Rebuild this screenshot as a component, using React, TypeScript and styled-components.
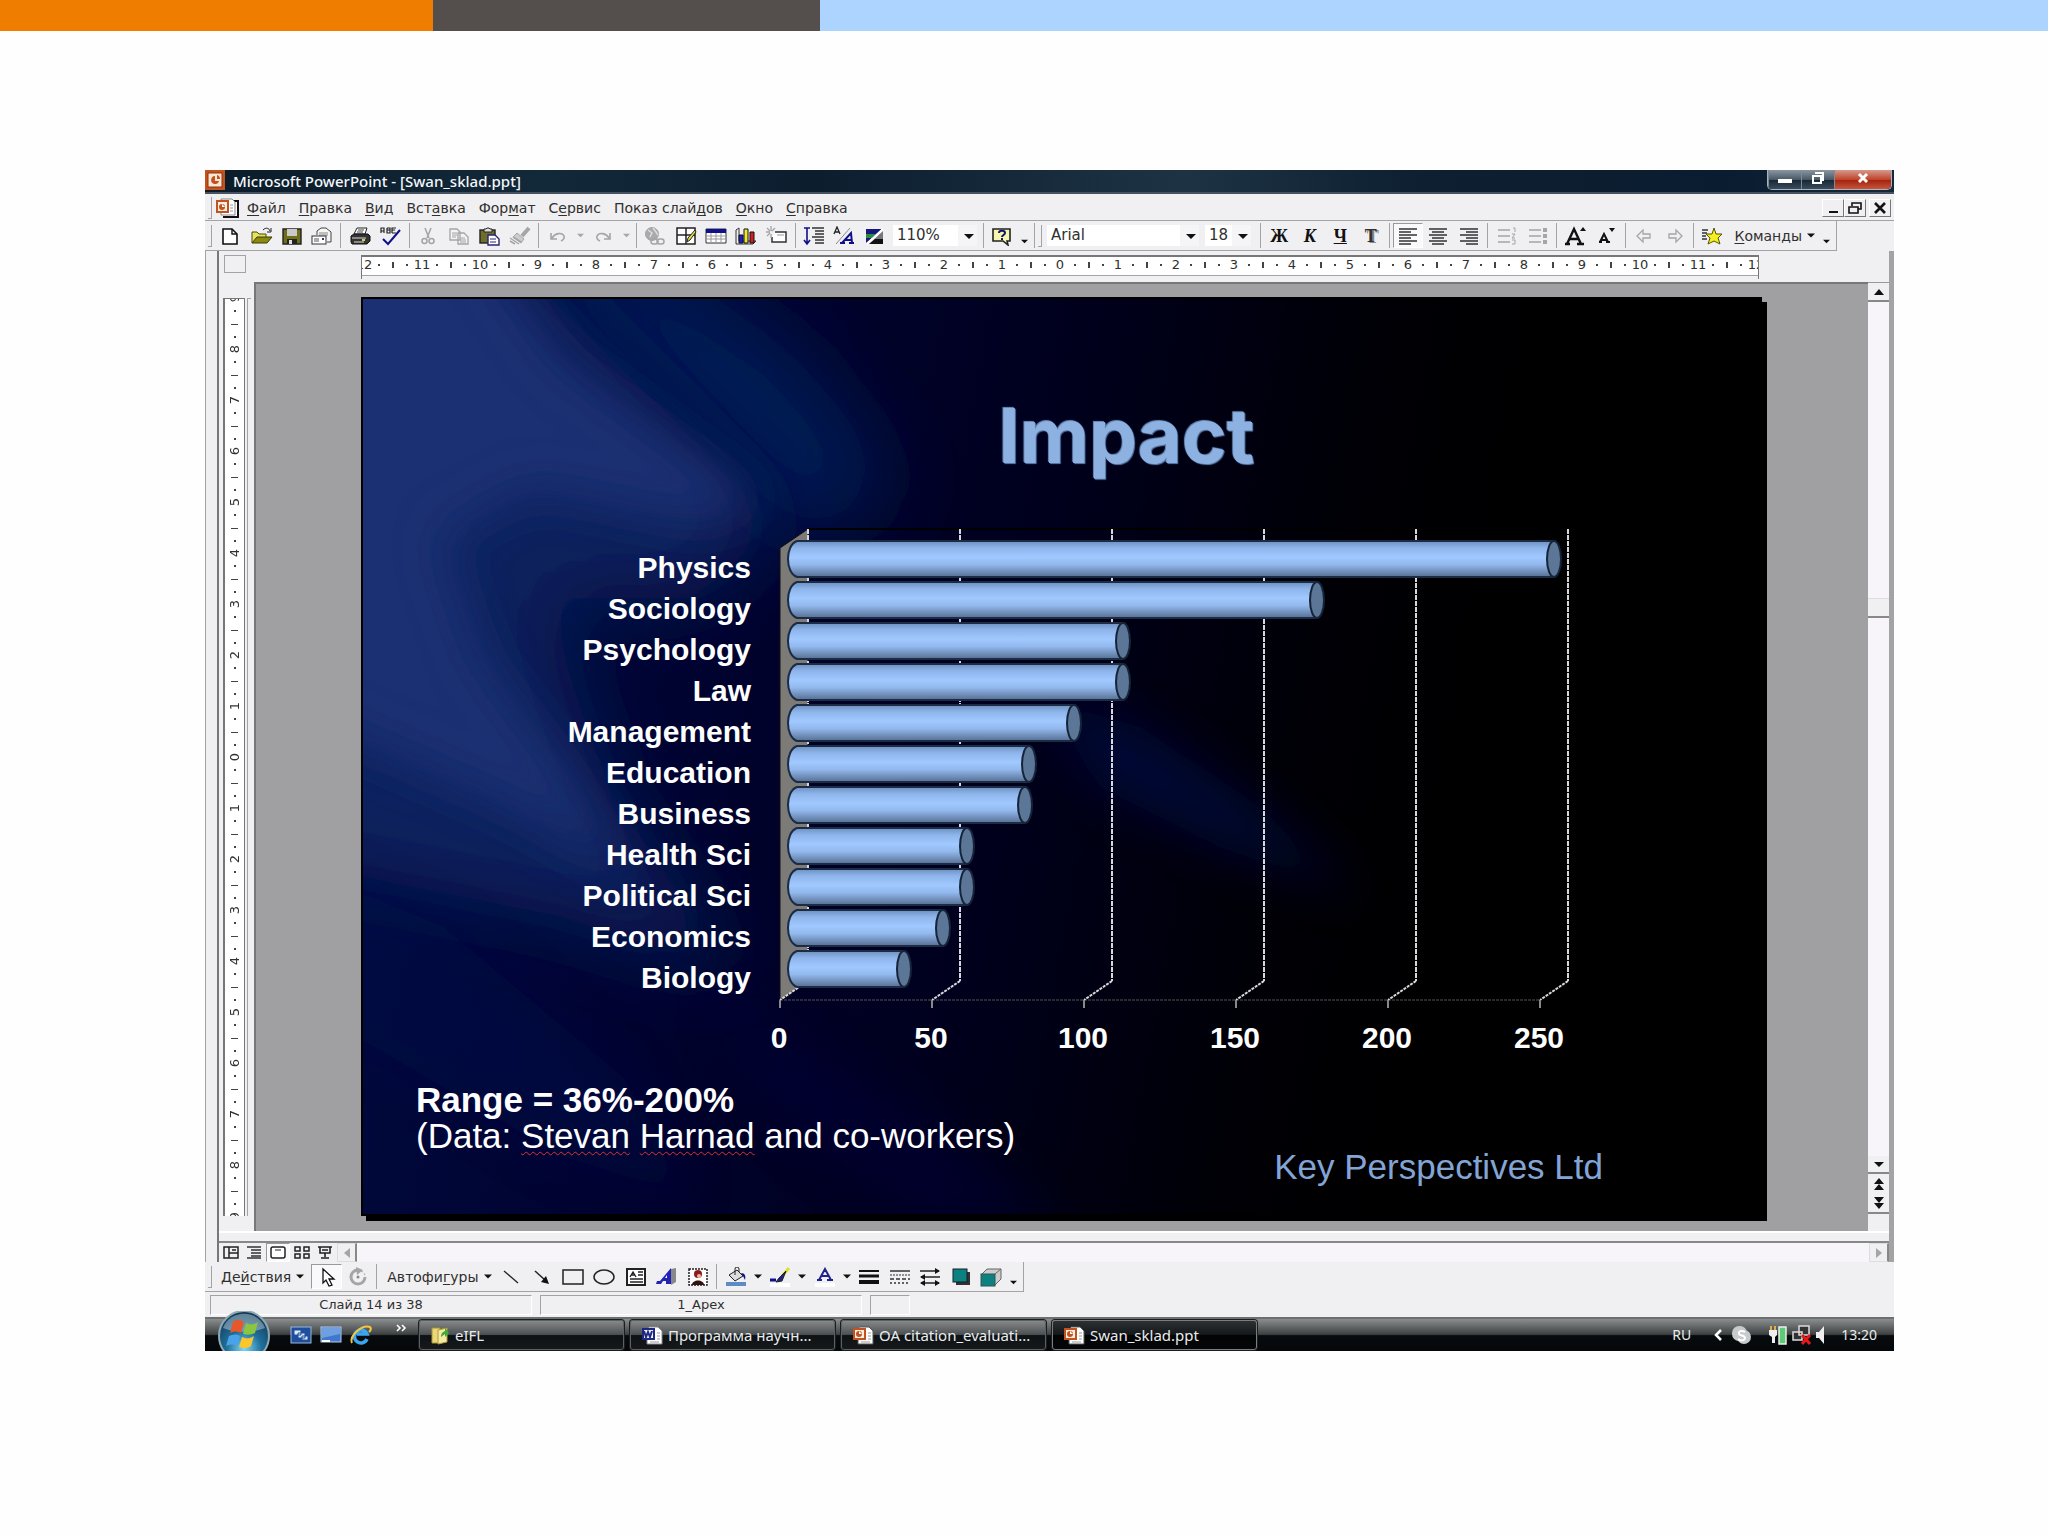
import React from 'react';
import styled, { createGlobalStyle, css } from 'styled-components';

const GlobalStyle = createGlobalStyle`
  * { box-sizing: border-box; }
  body { margin: 0; background: #fefefe; }
  button, select { font: inherit; color: inherit; }
`;

const uiFont = '"DejaVu Sans", Verdana, sans-serif';
const shellFont = '"Noto Sans", "Open Sans", sans-serif';
const slideFont = '"Liberation Sans", Arial, sans-serif';
const face = '#f0eff1';
const edge = '#a3a2a4';

/* ---------- page ---------- */
const Stripe = styled.div`
  display: grid;
  grid-template-columns: 433fr 387fr 1228fr;
  height: 31px;
`;
const StripePart = styled.span<{ $color: string }>`
  background: ${p => p.$color};
`;
const Page = styled.main`
  padding: 139px 154px 120px 205px;
`;
const AppWindow = styled.div`
  display: flex;
  flex-direction: column;
  background: ${face};
  color: #303030;
  font: 14px/20px ${uiFont};
  overflow: hidden;
`;

/* ---------- title bar ---------- */
const TitleBar = styled.header`
  display: flex;
  height: 24px;
  background: linear-gradient(90deg, #0b1b29, #12293a 20%, #0c1d2e 36%, #1d3344 58%, #0d1f30 72%, #0a1c2f 90%, #14293b);
  border-bottom: 2px solid #46525f;
`;
const AppTitle = styled.h1`
  flex: 1;
  margin: 0 0 0 8px;
  color: #f4f7fa;
  font: 500 15px/22px ${shellFont};
`;
const CaptionButtons = styled.div`
  display: flex;
  height: 20px;
  margin-right: 2px;
  border: 1px solid #a9b4be;
  border-top: 0;
  border-radius: 0 0 5px 5px;
  overflow: hidden;
`;
const CaptionButton = styled.button<{ $close?: boolean }>`
  display: grid;
  place-items: center;
  width: ${p => (p.$close ? 57 : 33)}px;
  padding: 0 0 3px;
  border: 0;
  border-left: 1px solid #7d8a96;
  background: ${p => p.$close
    ? 'linear-gradient(#d59a8c, #c0452b 50%, #a32410 55%, #c8553c)'
    : 'linear-gradient(#8a97a2, #4a5966 50%, #172836 55%, #3b4c5a)'};
`;

/* ---------- menu ---------- */
const MenuBar = styled.nav`
  display: flex;
  align-items: center;
  height: 27px;
  padding: 1px 3px 0 3px;
  border-bottom: 1px solid ${edge};
`;
const Grip = styled.span`
  width: 4px;
  height: 22px;
  margin-right: 2px;
  border-right: 1px solid ${edge};
  border-bottom: 1px solid ${edge};
`;
const MenuItems = styled.div`
  display: flex;
  flex: 1;
  gap: 13px;
  margin-left: 8px;
`;
const MenuItem = styled.button`
  padding: 0;
  border: 0;
  background: none;
  text-underline-offset: 2px;
`;
const ChildButtons = styled.div`
  display: flex;
`;
const ChildButton = styled.button<{ $apart?: boolean }>`
  display: grid;
  place-items: center;
  width: 22px;
  height: 18px;
  margin-left: ${p => (p.$apart ? 3 : 0)}px;
  padding: 0;
  border: 1px solid;
  border-color: #fff #777 #777 #fff;
  background: ${face};
`;

/* ---------- tool bars ---------- */
const ToolBar = styled.div`
  display: flex;
  align-self: flex-start;
  align-items: center;
  height: 30px;
  padding-left: 3px;
  border-right: 1px solid ${edge};
  border-bottom: 1px solid ${edge};
`;
const Group = styled.div<{ $width: number; $last?: boolean }>`
  display: flex;
  align-items: center;
  width: ${p => p.$width}px;
  height: 25px;
  padding: 0 3px;
  border-right: ${p => (p.$last ? 0 : 1)}px solid ${edge};
`;
const ToolButton = styled.button<{ $pressed?: boolean; $narrow?: boolean }>`
  display: grid;
  place-items: center;
  flex: ${p => (p.$narrow ? '0 0 14px' : '1 1 22px')};
  min-width: 0;
  height: 25px;
  padding: 0;
  border: 0;
  background: none;
  ${p => p.$pressed && css`
    border: 1px solid;
    border-color: #999 #fff #fff #999;
    background: #f9f8fa;
  `}
`;
const TextButton = styled.button`
  display: flex;
  align-items: center;
  flex: 0 0 auto;
  gap: 5px;
  padding: 0 4px 0 7px;
  border: 0;
  background: none;
  white-space: nowrap;
  text-underline-offset: 2px;
`;
const Combo = styled.label<{ $width: number }>`
  position: relative;
  flex: 0 0 ${p => p.$width}px;
  margin: 0 3px;
  height: 21px;
  background: linear-gradient(90deg, #fff calc(100% - 19px), #f5f4f6 0);
  svg { position: absolute; right: 3px; top: 9px; pointer-events: none; }
`;
const ComboSelect = styled.select`
  appearance: none;
  width: 100%;
  height: 21px;
  padding: 0 0 2px 4px;
  border: 0;
  background: none;
  font-size: 15px;
  line-height: 19px;
`;

/* ---------- work area ---------- */
const Workspace = styled.div`
  display: flex;
  border-right: 5px solid ${edge};
`;
const LeftStrip = styled.div`
  flex: 0 0 12px;
  border-left: 1px solid ${edge};
`;
const Editor = styled.div`
  flex: 1;
  min-width: 0;
  border-left: 2px solid #777;
`;
const RulerRow = styled.div`
  display: flex;
  height: 31px;
  padding: 4px 130px 0 5px;
`;
const Corner = styled.span`
  flex: 0 0 22px;
  height: 18px;
  margin-right: 115px;
  border: 1px solid ${edge};
`;
const HRuler = styled.div`
  display: flex;
  justify-content: center;
  flex: 1;
  min-width: 0;
  height: 24px;
  border: 1px solid #777;
  border-top-width: 2px;
  border-bottom: 0;
  overflow: hidden;
  background: linear-gradient(#fff 18px, ${edge} 18px, ${edge} 19px, ${face} 19px);
  font-size: 13px;
  line-height: 15px;
`;
const HUnit = styled.span<{ $end?: boolean }>`
  display: grid;
  grid-template-columns: ${p => (p.$end ? '16px' : '16px 14px 14px 14px')};
  flex: 0 0 ${p => (p.$end ? 16 : 58)}px;
  height: 15px;
  align-items: center;
  justify-items: center;
`;
const HNumber = styled.span`
  display: flex;
  justify-content: center;
  width: 16px;
`;
const Mark = styled.i<{ $w: number; $h: number }>`
  width: ${p => p.$w}px;
  height: ${p => p.$h}px;
  background: #444;
`;
const Body = styled.div`
  display: flex;
`;
const VRulerColumn = styled.div`
  flex: 0 0 35px;
  display: flex;
  gap: 2px;
  padding: 16px 3px 15px 4px;
`;
const VRuler = styled.div`
  display: flex;
  flex-direction: column;
  justify-content: center;
  flex: 0 0 22px;
  height: 918px;
  border: 1px solid #777;
  border-left-width: 2px;
  border-bottom: 0;
  overflow: hidden;
  background: #fff;
  font-size: 13px;
  line-height: 16px;
`;
const VUnit = styled.span<{ $end?: boolean }>`
  display: grid;
  grid-template-rows: ${p => (p.$end ? '12px' : '12px 13px 13px 13px')};
  flex: 0 0 ${p => (p.$end ? 12 : 51)}px;
  align-items: center;
  justify-items: center;
`;
const VNumber = styled.span`
  writing-mode: vertical-rl;
  transform: rotate(180deg);
`;
const VTrack = styled.span`
  width: 4px;
  border-left: 1px solid ${edge};
  border-top: 1px solid ${edge};
`;
const Pane = styled.div`
  flex: 1;
  min-width: 0;
  padding: 13px 106px 15px 105px;
  border-top: 2px solid #777;
  border-left: 2px solid #777;
  background: #a09fa1;
`;
const VScroll = styled.div`
  display: flex;
  flex-direction: column;
  flex: 0 0 21px;
  border-top: 1px solid #999;
  background: #f7f5f9;
`;
const ScrollButton = styled.button<{ $h: number }>`
  display: grid;
  place-items: center;
  height: ${p => p.$h}px;
  padding: 0;
  border: 0;
  border-bottom: 2px solid #888;
  background: ${face};
`;
const PageButtons = styled.div`
  display: flex;
  flex-direction: column;
  button:first-child { border-bottom: 0; }
`;
const Track = styled.div<{ $grow: number }>`
  flex: ${p => p.$grow} 1 0;
`;
const Thumb = styled.div`
  height: 20px;
  border-top: 1px solid #ddd;
  border-bottom: 2px solid #888;
  background: ${face};
`;
const ScrollFoot = styled.div`
  height: 17px;
  background: ${face};
`;
const Splitter = styled.div`
  height: 12px;
  border-top: 2px solid #fff;
  border-bottom: 2px solid #888;
`;
const ViewBar = styled.div`
  display: flex;
  align-items: stretch;
  height: 19px;
  background: #f7f5f9;
`;
const ViewButtons = styled.div`
  display: flex;
  width: 118px;
  background: ${face};
`;
const ViewButton = styled(ToolButton)`
  height: 19px;
`;
const EndButton = styled.button<{ $left?: boolean }>`
  width: 20px;
  padding: 0;
  display: grid;
  place-items: center;
  border: 1px solid #ddd;
  border-right: 2px solid #888;
  margin-left: ${p => (p.$left ? '0' : 'auto')};
  background: ${face};
`;

/* ---------- slide ---------- */
const Slide = styled.section`
  position: relative;
  border: 2px solid #000;
  box-shadow: 5px 5px 0 #000;
  background: #000;
  color: #fff;
  font-family: ${slideFont};
`;
const Backdrop = styled.svg`
  position: absolute;
  inset: 0;
  width: 100%;
  height: 100%;
`;
const SlideContent = styled.div`
  position: relative;
  padding: 86px 157px 29px 53px;
`;
const SlideTitle = styled.h2`
  margin: 0 0 35px 234px;
  text-align: center;
  color: #8db2e2;
  font: bold 76px/100px Inter, ${shellFont};
  text-shadow: 1px 1px 1px #5c7fae, -1px -1px 1px #6f93c2;
`;
const Chart = styled.svg`
  display: block;
  width: 1080px;
  max-width: 100%;
  margin-left: 124px;
  font: bold 30px ${slideFont};
`;
const Captions = styled.div`
  display: flex;
  justify-content: space-between;
  margin-top: 22px;
`;
const Notes = styled.p`
  margin: 0;
  font-size: 35px;
  line-height: 36px;
`;
const Misspelt = styled.span`
  text-decoration: underline wavy #e03030 1px;
  text-underline-offset: 3px;
  text-decoration-skip-ink: none;
`;
const Credit = styled.p`
  margin: 67px 0 0;
  color: #83a5d6;
  font-size: 35px;
  line-height: 36px;
`;

/* ---------- status and task bar ---------- */
const StatusBar = styled.footer`
  display: flex;
  gap: 8px;
  padding: 3px 5px 2px;
  font-size: 13px;
  line-height: 18px;
`;
const StatusPane = styled.span<{ $width: number }>`
  width: ${p => p.$width}px;
  height: 20px;
  border: 1px solid;
  border-color: ${edge} #fff #fff ${edge};
  text-align: center;
`;
const TaskBar = styled.div`
  display: flex;
  align-items: center;
  height: 34px;
  border-top: 2px solid #6b6f70;
  background: linear-gradient(#8b8e8f, #3d4142 48%, #070b0d 52%, #04080a);
  color: #e9ecee;
  font: 14px/20px ${shellFont};
`;
const StartButton = styled.button`
  width: 56px;
  height: 40px;
  margin: -8px 16px 0 11px;
  padding: 0;
  border: 0;
  background: none;
`;
const QuickLaunch = styled.div`
  display: flex;
  align-items: center;
  gap: 8px;
  width: 131px;
  padding-left: 2px;
`;
const BareButton = styled.button`
  display: grid;
  place-items: center;
  padding: 0;
  border: 0;
  background: none;
`;
const More = styled(BareButton)`
  margin: -14px 0 0 16px;
`;
const Tasks = styled.div`
  display: flex;
  flex: 1;
  gap: 6px;
`;
const Task = styled.button<{ $active?: boolean }>`
  display: flex;
  align-items: center;
  gap: 5px;
  width: 205px;
  height: 30px;
  padding: 0 0 0 10px;
  border: 1px solid ${p => (p.$active ? '#7c7c7c' : '#5b6062')};
  border-radius: 3px;
  background: ${p => p.$active
    ? 'linear-gradient(#2e3133, #15181a 48%, #020303 52%, #050607)'
    : 'linear-gradient(#85898a, #4c5052 48%, #0e1214 52%, #15191b)'};
  box-shadow: 0 0 0 1px #1b1e20;
  font-size: 15px;
  white-space: nowrap;
`;
const Tray = styled.div`
  display: flex;
  align-items: center;
  padding-right: 17px;
`;
const Language = styled.span`
  margin-right: 22px;
`;
const Clock = styled.time`
  margin-left: 14px;
`;

/* ---------- icons ---------- */
const Ico = ({ w = 22, h = 20, children }: { w?: number; h?: number; children: React.ReactNode }) => (
  <svg width={w} height={h} viewBox={`0 0 ${w} ${h}`} fill="none" aria-hidden="true">{children}</svg>
);
const Down = ({ c = '#111', w = 9 }: { c?: string; w?: number }) => (
  <svg width={w} height={5} viewBox="0 0 10 5" aria-hidden="true"><path d="M0 0h10L5 5z" fill={c} /></svg>
);
const g = '#a5a4a6';
const navy = '#10108a';

const PptIcon = () => (
  <Ico w={20} h={20}>
    <rect width="20" height="20" fill="#c2521e" /><rect x="3" y="3" width="14" height="14" fill="#fbe6d6" stroke="#8c3410" />
    <path d="M10 6a4 4 0 1 0 4 5h-4z" fill="#c2521e" /><path d="M12 5a4 4 0 0 1 3 4h-3z" fill="#c2521e" />
  </Ico>
);
const PptDoc = ({ word = false }: { word?: boolean }) => (
  <Ico w={22} h={20}>
    <path d="M8 2h9l4 4v13H6V8" fill="#fff" stroke={word ? '#888' : '#555'} />
    <path d="M16 8h3M16 11h3M16 14h3M9 17h9" stroke="#999" />
    <rect x="1" y="3" width="13" height="12" fill={word ? '#1b2a86' : '#c2521e'} />
    <rect x="3" y="5" width="9" height="8" fill="#fbeee4" />
    {word ? <path d="M3 6l2 6 2-5 2 5 2-6" stroke="#1b2a86" strokeWidth="2" />
      : <><circle cx="7" cy="9" r="3" fill="#c2521e" /><path d="M7 9V6l3 3z" fill="#fff" /></>}
  </Ico>
);
const MenuDoc = () => (
  <Ico w={25} h={20}>
    <path d="M12 3h12v16H9" fill="#fff" stroke="#111" strokeWidth="2" />
    <path d="M7 1h11l3 3v13H7z" fill="#fff" stroke="#888" />
    <path d="M16 7h3M16 10h3M16 13h3" stroke="#999" />
    <rect x="2" y="2" width="13" height="13" fill="#c2521e" />
    <rect x="4" y="4" width="9" height="9" fill="#fbeee4" />
    <circle cx="8" cy="9" r="3" fill="#c2521e" /><path d="M8 9V6l3 3z" fill="#fff" />
  </Ico>
);
const icons: Record<string, React.ReactNode> = {
  new: <Ico><path d="M2 3h9l5 5v10H2z" fill="#fff" stroke="#111" strokeWidth="1.6" /><path d="M11 3v5h5" stroke="#111" strokeWidth="1.4" /></Ico>,
  open: <Ico><path d="M1 17V6h5l2 2h7v3" fill="#e8e060" stroke="#4b4b00" /><path d="M1 17l5-6h15l-5 6z" fill="#8a8a10" stroke="#3c3c00" /><path d="M12 4c3-3 6-2 7 1M20 2v4h-4" stroke="#222" /></Ico>,
  save: <Ico><path d="M2 3h18v15H2z" fill="#6e6e18" stroke="#222" strokeWidth="1.4" /><rect x="6" y="3" width="10" height="7" fill="#c9c9c9" /><rect x="6" y="13" width="10" height="5" fill="#222" /><rect x="8" y="14" width="3" height="4" fill="#ddd" /></Ico>,
  mail: <Ico><path d="M6 9V5l4-3h5l5 4v10h-4" fill="#f5f5f5" stroke="#444" /><path d="M8 7h9M8 9h9" stroke="#888" /><rect x="1" y="10" width="14" height="8" fill="#fff" stroke="#333" /><path d="M3 13h5M3 15h5" stroke="#557" /><rect x="11" y="12" width="2" height="2" fill="#336" /></Ico>,
  print: <Ico><path d="M8 2h10l-2 6H5z" fill="#fff" stroke="#222" /><path d="M9 4h6M8 6h6" stroke="#444" /><path d="M2 10l3-2h14l2 2v5l-3 3H3l-1-2z" fill="#333" stroke="#111" /><path d="M3 12h14M5 16h10" stroke="#ddd" /><rect x="13" y="13" width="3" height="2" fill="#e0d040" /></Ico>,
  spell: <Ico><path d="M1 7V2h3v5M1 5h3M7 2v5h3V4H7h3V2H7M12 7V2h4M12 4h3M12 7h4" stroke="#222" strokeWidth="1.2" /><path d="M3 13l5 5L20 4" stroke={navy} strokeWidth="2" /></Ico>,
  cut: <Ico><path d="M8 2l4 10M14 2l-4 10" stroke={g} strokeWidth="1.5" /><circle cx="7.500" cy="15" r="2.500" stroke={g} strokeWidth="1.500" /><circle cx="14.500" cy="15" r="2.500" stroke={g} strokeWidth="1.500" /></Ico>,
  copy: <Ico><path d="M2 3h7l3 3v8H2zM10 7h6l4 4v7H10z" fill="#f3f3f3" stroke={g} strokeWidth="1.300" /><path d="M4 7h5M4 9h5M4 11h4M12 12h5M12 14h6M12 16h6" stroke={g} /></Ico>,
  paste: <Ico><rect x="2" y="4" width="15" height="13" fill="#6e6e28" stroke="#222" strokeWidth="1.400" /><path d="M6 6V3h2l1-1h2l1 1h2v3z" fill="#ddd" stroke="#222" /><path d="M10 9h7l4 4v6H10z" fill="#fff" stroke="#26267a" strokeWidth="1.400" /><path d="M12 13h6M12 16h6" stroke="#26267a" /></Ico>,
  brush: <Ico><path d="M20 2l-7 8" stroke={g} strokeWidth="4" /><path d="M8 7l7 6-3 4-8-6z" fill="#ccc" stroke={g} /><path d="M1 12l9 6M1 15l5 3M4 11l8 5" stroke={g} strokeWidth="1.500" /></Ico>,
  undo: <Ico><path d="M4 7v6h6M5 12c3-5 10-6 12-2 1 3-1 4-3 5" stroke={g} strokeWidth="1.600" /></Ico>,
  redo: <Ico><path d="M18 7v6h-6M17 12c-3-5-10-6-12-2-1 3 1 4 3 5" stroke={g} strokeWidth="1.600" /></Ico>,
  globe: <Ico><circle cx="8" cy="8" r="6.500" fill="#aaa" stroke={g} /><path d="M4 4l4 3-2 4M9 2l3 4 2 3" stroke="#ddd" strokeWidth="1.500" /><rect x="7" y="13" width="7" height="5" rx="2.500" stroke={g} strokeWidth="1.500" /><rect x="13" y="13" width="7" height="5" rx="2.500" stroke={g} strokeWidth="1.500" /></Ico>,
  tables: <Ico><path d="M2 2h18v16H2zM2 9h18M11 2v16" fill="#fff" stroke="#222" strokeWidth="1.500" /><path d="M12 16l1-4 7-8 1 2-6 8z" fill="#e4e040" stroke="#222" /></Ico>,
  table: <Ico><path d="M1 3h20v14H1z" fill="#fff" stroke="#333" /><rect x="1" y="3" width="20" height="4" fill={navy} /><path d="M1 10h20M1 13h20M6 7v10M11 7v10M16 7v10" stroke="#999" /></Ico>,
  chart: <Ico><path d="M1 4l3-2v13h17l-3 3H1z" fill="#eee" stroke="#333" /><path d="M4 9h4v8H4z" fill="#2020c0" stroke="#111" /><path d="M9 3h4v14H9z" fill="#f0e830" stroke="#111" /><path d="M15 6h4v11h-4z" fill="#d02020" stroke="#111" /></Ico>,
  slide: <Ico><path d="M9 6h11v10H6v-5" fill="#fff" stroke="#333" strokeWidth="1.500" /><path d="M11 9h7" stroke="#999" /><path d="M5 0v5M0 6h4M1 2l3 3M9 2L6 5M1 10l3-3M5 8v4" stroke={g} strokeWidth="1.300" /></Ico>,
  expand: <Ico><path d="M4 2v15M1 14l3 4 3-4M1 2h6" stroke={navy} strokeWidth="1.600" /><path d="M9 2h12M12 5h9M12 8h9M9 11h12M12 14h9M12 17h9" stroke="#333" strokeWidth="1.300" /></Ico>,
  fonts: <Ico><path d="M1 8l3-7 3 7M2 6h4" stroke="#222" strokeWidth="1.300" /><path d="M3 18L17 2" stroke="#888" /><path d="M9 17l9-10 1 10M12 14h7M7 17h5M16 17h5" stroke={navy} strokeWidth="2" /></Ico>,
  gray: <Ico><path d="M2 3h16L2 17z" fill="#171780" /><path d="M2 8h10l-4 4H2z" fill="#2a8a40" /><path d="M19 5v13H5z" fill="#777" /><path d="M11 13h8v5H5z" fill="#111" /><path d="M3 18L19 3" stroke="#fff" strokeWidth="2" /></Ico>,
  help: <Ico><path d="M2 3h17v12h-3l1 4-5-4H2z" fill="#f7f6b0" stroke="#222" strokeWidth="1.600" /><path d="M8 7c0-3 6-3 6 0 0 2-3 2-3 4M11 12v2" stroke="#15156a" strokeWidth="2" /></Ico>,
  left: <Ico><path d="M2 3h18M2 6h12M2 9h18M2 12h12M2 15h18M2 18h12" stroke="#333" strokeWidth="1.400" /></Ico>,
  center: <Ico><path d="M2 3h18M5 6h12M2 9h18M5 12h12M2 15h18M5 18h12" stroke="#333" strokeWidth="1.400" /></Ico>,
  right: <Ico><path d="M2 3h18M8 6h12M2 9h18M8 12h12M2 15h18M8 18h12" stroke="#333" strokeWidth="1.400" /></Ico>,
  numbers: <Ico><path d="M2 4h12M2 10h12M2 16h12" stroke={g} strokeWidth="1.300" /><path d="M17 2h2v4M16 8h3l-3 4h3M16 14h3v4h-3" stroke={g} /></Ico>,
  bullets: <Ico><path d="M2 4h12M2 10h12M2 16h12" stroke={g} strokeWidth="1.300" /><path d="M16 2h4v4h-4zM16 8h4v4h-4zM16 14h4v4h-4z" fill={g} /></Ico>,
  bigger: <Ico><path d="M2 18L9 3l7 15M5 13h8M0 18h5M12 18h7" stroke="#111" strokeWidth="2.400" /><path d="M15 5h6l-3-4z" fill="#111" /></Ico>,
  smaller: <Ico><path d="M4 16l4-8 4 8M5 14h6M3 16h3M10 16h4" stroke="#111" strokeWidth="2" /><path d="M13 2h6l-3 4z" fill="#111" /></Ico>,
  prev: <Ico><path d="M4 10l6-6v4h7v4h-7v4z" stroke={g} strokeWidth="1.300" /></Ico>,
  next: <Ico><path d="M18 10l-6-6v4H5v4h7v4z" stroke={g} strokeWidth="1.300" /></Ico>,
  star: <Ico><path d="M1 4h6M1 7h5M1 10h4M1 13h5" stroke="#333" strokeWidth="1.500" /><path d="M13 2l2 6h6l-4 4 2 6-6-3-6 3 2-6-4-4h6z" fill="#f5ee20" stroke="#555500" /></Ico>,
  pointer: <Ico><path d="M7 2v14l3-3 3 6 3-1-3-6h5z" fill="#fff" stroke="#111" strokeWidth="1.300" /></Ico>,
  rotate: <Ico><path d="M11 3a7 7 0 1 0 7 7" stroke={g} strokeWidth="3" /><path d="M9 0l7 3-6 5z" fill={g} /><circle cx="11" cy="10" r="1.500" fill="#888" /><path d="M14 4c3 1 4 3 4 6" stroke={g} strokeDasharray="2 2" /></Ico>,
  line: <Ico><path d="M4 4l14 12" stroke="#222" strokeWidth="1.300" /></Ico>,
  arrow: <Ico><path d="M4 4l10 9" stroke="#222" strokeWidth="1.500" /><path d="M18 17l-8-2 5-6z" fill="#111" /></Ico>,
  rect: <Ico><path d="M1 3h20v14H1z" stroke="#222" strokeWidth="1.500" /></Ico>,
  oval: <Ico><ellipse cx="11" cy="10" rx="10" ry="7" stroke="#222" strokeWidth="1.500" /></Ico>,
  textbox: <Ico><path d="M2 2h18v16H2z" fill="#fff" stroke="#222" strokeWidth="2" /><path d="M5 10l3-5 3 5M6 8h4M13 5h5M13 8h5M5 12h13M5 15h13" stroke="#222" strokeWidth="1.400" /></Ico>,
  wordart: <Ico><path d="M1 14h3L15 1v16h-5v-3H7l-2 3H0z" fill="#2222b4" /><path d="M15 2l5-1v14l-5 3z" fill="#888" /><path d="M9 11l2-3v3z" fill="#fff" /></Ico>,
  clip: <Ico><path d="M2 2h18v16H2z" fill="#fff" stroke="#222" strokeDasharray="2 1" strokeWidth="1.500" /><circle cx="11" cy="7" r="4" fill="#8c1c1c" /><circle cx="12" cy="9" r="2" fill="#eebb99" /><path d="M5 18c0-6 12-6 12 0z" fill="#331111" /></Ico>,
  fill: <Ico><path d="M4 8l8-5 6 6-8 5z" fill="#ddd" stroke="#222" /><path d="M10 8V2a2 2 0 0 1 4 0v3" stroke="#222" /><path d="M16 6c4 0 5 3 4 7l-2-4z" fill={navy} /><rect x="1" y="15" width="20" height="4" fill="#5c8cc4" /></Ico>,
  pen: <Ico><path d="M1 13h6" stroke={navy} strokeWidth="3" /><path d="M20 1L13 9" stroke="#dce030" strokeWidth="3" /><path d="M17 4l-4 10-6 1 3-4z" fill="#222288" stroke="#222" /><rect x="1" y="16" width="20" height="4" fill="#fff" /></Ico>,
  colour: <Ico><path d="M5 13l6-11 6 11M7 9h8M3 13h5M13 13h6" stroke="#22228c" strokeWidth="2" /><rect x="1" y="16" width="20" height="4" fill="#fff" /></Ico>,
  weight: <Ico><path d="M1 4h20" stroke="#111" strokeWidth="2" /><path d="M1 9h20" stroke="#111" strokeWidth="3" /><path d="M1 15h20" stroke="#111" strokeWidth="4" /></Ico>,
  dash: <Ico><path d="M1 4h20" stroke="#333" strokeWidth="1.500" /><path d="M1 8h20" stroke="#333" strokeDasharray="2 1" /><path d="M1 12h20" stroke="#333" strokeWidth="1.500" strokeDasharray="4 2" /><path d="M1 16h20" stroke="#333" strokeWidth="1.500" strokeDasharray="2 2" /></Ico>,
  arrows: <Ico><path d="M1 4h19M2 10h19M2 16h18" stroke="#222" strokeWidth="1.500" /><path d="M21 4l-5-3v6zM1 10l5-3v6zM1 16l5-3v6zM21 16l-5-3v6z" fill="#111" /></Ico>,
  shadow: <Ico><rect x="6" y="5" width="14" height="13" fill="#333" /><rect x="3" y="2" width="14" height="13" fill="#0d8080" stroke="#123" /></Ico>,
  cube: <Ico><path d="M1 8l6-6h14v10l-6 6z" fill="#ccc" stroke="#666" /><rect x="1" y="7" width="14" height="12" fill="#0d8080" stroke="#355" /><path d="M15 7l6-5" stroke="#666" /></Ico>,
  normal: <Ico w={18} h={15}><path d="M2 2h14v11H2zM7 2v11M7 8h9M10 5h4" stroke="#222" strokeWidth="1.500" /></Ico>,
  outline: <Ico w={18} h={15}><path d="M2 2h14M6 5h10M6 8h10M6 11h10M2 13h14" stroke="#333" strokeWidth="1.300" /></Ico>,
  single: <Ico w={18} h={15}><rect x="2" y="2" width="14" height="11" rx="2" fill="#fff" stroke="#222" strokeWidth="1.500" /><path d="M6 5h6" stroke="#222" /></Ico>,
  sorter: <Ico w={18} h={15}><path d="M2 2h5v4H2zM11 2h5v4h-5zM2 9h5v4H2zM11 9h5v4h-5z" stroke="#222" strokeWidth="1.500" /></Ico>,
  show: <Ico w={18} h={15}><path d="M2 2h14M4 2v6h10V2M9 8v4M5 13h8M6 5h6" stroke="#222" strokeWidth="1.600" /></Ico>,
};

const Glyph = styled.span<{ $italic?: boolean; $line?: boolean; $shade?: boolean }>`
  color: #111;
  font: bold 18px/20px "Liberation Serif", serif;
  font-style: ${p => (p.$italic ? 'italic' : 'normal')};
  text-decoration: ${p => (p.$line ? 'underline' : 'none')};
  ${p => p.$shade && 'color: #333; text-shadow: 2px 1px 0 #888;'}
`;

const Tool = ({ name, label, pressed }: { name: string; label: string; pressed?: boolean }) => (
  <ToolButton aria-label={label} $pressed={pressed}>{icons[name]}</ToolButton>
);
const DropTool = ({ label, muted }: { label: string; muted?: boolean }) => (
  <ToolButton aria-label={label} $narrow><Down c={muted ? g : '#111'} w={muted ? 7 : 8} /></ToolButton>
);
const LowDropButton = styled(ToolButton)`
  place-items: end center;
  padding-bottom: 4px;
`;
const MoreTools = ({ label }: { label: string }) => (
  <LowDropButton aria-label={label} $narrow><Down w={7} /></LowDropButton>
);
const Mnemonic = ({ text }: { text: string }) => {
  const [before, after] = text.split('&');
  return <span>{before}<u>{after[0]}</u>{after.slice(1)}</span>;
};
const Picker = ({ label, value, width }: { label: string; value: string; width: number }) => (
  <Combo $width={width}>
    <ComboSelect aria-label={label} defaultValue={value}><option>{value}</option></ComboSelect>
    <Down w={10} />
  </Combo>
);

/* ---------- chart ---------- */
const disciplines: [string, number][] = [
  ['Physics', 1561], ['Sociology', 1324], ['Psychology', 1130], ['Law', 1130], ['Management', 1081],
  ['Education', 1036], ['Business', 1032], ['Health Sci', 974], ['Political Sci', 974], ['Economics', 950], ['Biology', 911],
];
const ticks = [0, 50, 100, 150, 200, 250];

const ImpactChart = () => (
  <Chart viewBox="540 520 1080 540" role="img" aria-label="Impact by discipline">
    <defs>
      <linearGradient id="bar" x1="0" y1="0" x2="0" y2="1">
        <stop offset="0" stopColor="#6c8fc0" /><stop offset=".2" stopColor="#8fb6ec" /><stop offset=".45" stopColor="#a1c9ff" />
        <stop offset=".65" stopColor="#93b9ee" /><stop offset="1" stopColor="#566f92" />
      </linearGradient>
    </defs>
    <path d="M780 548L808 529V981L780 1000z" fill="#7d7b78" stroke="#111" />
    <path d="M808 529H1569" stroke="#000" strokeWidth="2" />
    <path d="M780 1000H1541" stroke="#555" strokeDasharray="3 1" />
    {ticks.map((t, i) => {
      const x = 808 + i * 152;
      return (
        <g key={t} stroke="#d8d8dc" strokeWidth="2" fill="none">
          <path d={`M${x} 529V981`} strokeDasharray="5 1" />
          <path d={`M${x} 981L${x - 28} 1000`} strokeDasharray="3 1" />
          <path d={`M${x - 28} 1000v8`} stroke="#888" />
          <text x={x - 29} y="1048" textAnchor="middle" fill="#fff" stroke="none">{t}</text>
        </g>
      );
    })}
    {disciplines.map(([name, end], i) => {
      const y = 541 + i * 41;
      return (
        <g key={name}>
          <text x="751" y={y + 37} textAnchor="end" fill="#fff">{name}</text>
          <path d={`M${end - 7} ${y}H797C785 ${y + 4} 785 ${y + 32} 797 ${y + 36}H${end - 7}z`} fill="url(#bar)" stroke="#1c2c44" strokeWidth="2" />
          <ellipse cx={end - 7} cy={y + 18} rx="7" ry="18" fill="#5b7696" stroke="#16243a" strokeWidth="2" />
        </g>
      );
    })}
  </Chart>
);

const SlideBackdrop = () => (
  <Backdrop viewBox="0 0 1401 918" preserveAspectRatio="none" aria-hidden="true">
    <defs>
      <linearGradient id="night" x1="0" y1="0" x2="1" y2=".12">
        <stop offset="0" stopColor="#000c42" /><stop offset=".28" stopColor="#000330" /><stop offset=".5" stopColor="#00001e" />
        <stop offset=".72" stopColor="#000006" /><stop offset=".85" stopColor="#000" />
      </linearGradient>
      <filter id="wide" x="-50%" y="-50%" width="200%" height="200%"><feGaussianBlur stdDeviation="40" /></filter>
      <filter id="soft" x="-50%" y="-50%" width="200%" height="200%"><feGaussianBlur stdDeviation="24" /></filter>
    </defs>
    <rect width="1401" height="918" fill="url(#night)" />
    <path d="M150 -60L300 -40L440 60L540 190L440 240z" fill="#001a56" filter="url(#wide)" />
    <path d="M-100 -60H130L420 230L330 300L180 300L250 500L380 680L200 620L-100 560z" fill="#08205e" filter="url(#wide)" />
    <path d="M-100 -100H90L200 60L400 205L340 225L170 190L80 240L120 360L210 480L270 580L150 510L-100 400z" fill="#1b3174" opacity=".9" filter="url(#soft)" />
    <path d="M-40 580L80 630L260 780L330 900L200 860L-40 720z" fill="#000e4a" opacity=".5" filter="url(#soft)" />
    <path d="M680 400L780 430L900 510L1000 600L860 550L740 490z" fill="#000f50" opacity=".6" filter="url(#soft)" />
    <path d="M350 700L560 820L700 930H560L420 820z" fill="#00023a" opacity=".5" filter="url(#soft)" />
  </Backdrop>
);

const hNumbers = Array.from({ length: 25 }, (_, i) => Math.abs(i - 12));
const vNumbers = Array.from({ length: 19 }, (_, i) => Math.abs(i - 9));

export default function App() {
  return (
    <>
      <GlobalStyle />
      <Stripe>
        <StripePart $color="#ef7d00" /><StripePart $color="#544e4d" /><StripePart $color="#acd4ff" />
      </Stripe>
      <Page>
        <AppWindow>
          <TitleBar>
            <PptIcon />
            <AppTitle>Microsoft PowerPoint - [Swan_sklad.ppt]</AppTitle>
            <CaptionButtons>
              <CaptionButton aria-label="Свернуть"><Ico w={16} h={14}><path d="M1 8h14v4H1z" fill="#fff" /></Ico></CaptionButton>
              <CaptionButton aria-label="Развернуть"><Ico w={16} h={14}><path d="M5 2h8v7h-2M3 5h8v7H3z" stroke="#fff" strokeWidth="2" /></Ico></CaptionButton>
              <CaptionButton aria-label="Закрыть" $close><Ico w={14} h={12}><path d="M3 2l8 8M11 2l-8 8" stroke="#fff" strokeWidth="3" /></Ico></CaptionButton>
            </CaptionButtons>
          </TitleBar>

          <MenuBar>
            <Grip />
            <MenuDoc />
            <MenuItems>
              {['&Файл', '&Правка', '&Вид', 'Вст&авка', 'Фор&мат', 'С&ервис', 'Показ слай&дов', '&Окно', '&Справка'].map(t => (
                <MenuItem key={t}><Mnemonic text={t} /></MenuItem>
              ))}
            </MenuItems>
            <ChildButtons>
              <ChildButton aria-label="Свернуть документ"><Ico w={14} h={12}><path d="M3 10h9" stroke="#111" strokeWidth="2" /></Ico></ChildButton>
              <ChildButton aria-label="Восстановить документ"><Ico w={14} h={12}><path d="M4 4V1h9v6h-3M1 5h9v6H1z" stroke="#111" strokeWidth="1.600" /></Ico></ChildButton>
              <ChildButton aria-label="Закрыть документ" $apart><Ico w={14} h={12}><path d="M2 1l10 10M12 1L2 11" stroke="#111" strokeWidth="2.600" /></Ico></ChildButton>
            </ChildButtons>
          </MenuBar>

          <ToolBar>
            <Grip />
            <Group $width={127}>
              <Tool name="new" label="Создать" /><Tool name="open" label="Открыть" /><Tool name="save" label="Сохранить" /><Tool name="mail" label="Отправить" />
            </Group>
            <Group $width={69}><Tool name="print" label="Печать" /><Tool name="spell" label="Орфография" /></Group>
            <Group $width={129}>
              <Tool name="cut" label="Вырезать" /><Tool name="copy" label="Копировать" /><Tool name="paste" label="Вставить" /><Tool name="brush" label="Формат по образцу" />
            </Group>
            <Group $width={98}>
              <Tool name="undo" label="Отменить" /><DropTool label="Список отмены" muted /><Tool name="redo" label="Вернуть" /><DropTool label="Список возврата" muted />
            </Group>
            <Group $width={159}>
              <Tool name="globe" label="Гиперссылка" /><Tool name="tables" label="Таблицы и границы" /><Tool name="table" label="Таблица" /><Tool name="chart" label="Диаграмма" /><Tool name="slide" label="Создать слайд" />
            </Group>
            <Group $width={188}>
              <Tool name="expand" label="Развернуть все" /><Tool name="fonts" label="Показать формат" /><Tool name="gray" label="Оттенки серого" />
              <Picker label="Масштаб" value="110%" width={84} />
            </Group>
            <Group $width={51}><Tool name="help" label="Справка" /><MoreTools label="Другие кнопки" /></Group>
            <Group $width={226}>
              <Grip />
              <Picker label="Шрифт" value="Arial" width={152} /><Picker label="Размер" value="18" width={46} />
            </Group>
            <Group $width={129}>
              <ToolButton aria-label="Полужирный"><Glyph>Ж</Glyph></ToolButton>
              <ToolButton aria-label="Курсив"><Glyph $italic>К</Glyph></ToolButton>
              <ToolButton aria-label="Подчеркнутый"><Glyph $line>Ч</Glyph></ToolButton>
              <ToolButton aria-label="Тень"><Glyph $shade>Т</Glyph></ToolButton>
            </Group>
            <Group $width={98}>
              <Tool name="left" label="По левому краю" pressed /><Tool name="center" label="По центру" /><Tool name="right" label="По правому краю" />
            </Group>
            <Group $width={69}><Tool name="numbers" label="Нумерация" /><Tool name="bullets" label="Маркеры" /></Group>
            <Group $width={69}><Tool name="bigger" label="Увеличить" /><Tool name="smaller" label="Уменьшить" /></Group>
            <Group $width={68}><Tool name="prev" label="Повысить уровень" /><Tool name="next" label="Понизить уровень" /></Group>
            <Group $width={142} $last>
              <Tool name="star" label="Эффекты" />
              <TextButton><Mnemonic text="&Команды" /><Down w={8} /></TextButton>
              <MoreTools label="Другие кнопки форматирования" />
            </Group>
          </ToolBar>

          <Workspace>
            <LeftStrip />
            <Editor>
              <RulerRow>
                <Corner />
                <HRuler>
                  {hNumbers.map((n, i) => (
                    <HUnit key={i} $end={i === 24}>
                      <HNumber>{n}</HNumber>
                      {i < 24 && <><Mark $w={2} $h={2} /><Mark $w={2} $h={6} /><Mark $w={2} $h={2} /></>}
                    </HUnit>
                  ))}
                </HRuler>
              </RulerRow>
              <Body>
                <VRulerColumn>
                  <VRuler>
                    {vNumbers.map((n, i) => (
                      <VUnit key={i} $end={i === 18}>
                        <VNumber>{n}</VNumber>
                        {i < 18 && <><Mark $w={2} $h={2} /><Mark $w={7} $h={1} /><Mark $w={2} $h={2} /></>}
                      </VUnit>
                    ))}
                  </VRuler>
                  <VTrack />
                </VRulerColumn>
                <Pane>
                  <Slide>
                    <SlideBackdrop />
                    <SlideContent>
                      <SlideTitle>Impact</SlideTitle>
                      <ImpactChart />
                      <Captions>
                        <Notes>
                          <strong>Range = 36%-200%</strong><br />
                          (Data: <Misspelt>Stevan</Misspelt> <Misspelt>Harnad</Misspelt> and co-workers)
                        </Notes>
                        <Credit>Key Perspectives Ltd</Credit>
                      </Captions>
                    </SlideContent>
                  </Slide>
                </Pane>
                <VScroll>
                  <ScrollButton aria-label="Вверх" $h={19}><Ico w={10} h={6}><path d="M0 6h10L5 0z" fill="#111" /></Ico></ScrollButton>
                  <Track $grow={296} />
                  <Thumb />
                  <Track $grow={538} />
                  <ScrollButton aria-label="Вниз" $h={18}><Down w={10} /></ScrollButton>
                  <PageButtons>
                    <ScrollButton aria-label="Предыдущий слайд" $h={20}><Ico w={10} h={12}><path d="M0 6h10L5 0zM0 12h10L5 6z" fill="#111" /></Ico></ScrollButton>
                    <ScrollButton aria-label="Следующий слайд" $h={20}><Ico w={10} h={12}><path d="M0 0h10L5 6zM0 6h10l-5 6z" fill="#111" /></Ico></ScrollButton>
                  </PageButtons>
                  <ScrollFoot />
                </VScroll>
              </Body>
              <Splitter />
              <ViewBar>
                <ViewButtons>
                  <ViewButton aria-label="Обычный режим">{icons.normal}</ViewButton>
                  <ViewButton aria-label="Структура">{icons.outline}</ViewButton>
                  <ViewButton aria-label="Слайд" $pressed>{icons.single}</ViewButton>
                  <ViewButton aria-label="Сортировщик">{icons.sorter}</ViewButton>
                  <ViewButton aria-label="Показ слайдов">{icons.show}</ViewButton>
                </ViewButtons>
                <EndButton aria-label="Влево" $left><Ico w={6} h={10}><path d="M6 0v10L0 5z" fill={g} /></Ico></EndButton>
                <EndButton aria-label="Вправо"><Ico w={6} h={10}><path d="M0 0v10l6-5z" fill={g} /></Ico></EndButton>
              </ViewBar>
            </Editor>
          </Workspace>

          <ToolBar>
            <Grip />
            <TextButton><Mnemonic text="Де&йствия" /><Down w={8} /></TextButton>
            <Group $width={69}><Tool name="pointer" label="Выбор объектов" pressed /><Tool name="rotate" label="Свободное вращение" /></Group>
            <Group $width={340}>
              <TextButton><Mnemonic text="Автофи&гуры" /><Down w={8} /></TextButton>
              <Tool name="line" label="Линия" /><Tool name="arrow" label="Стрелка" /><Tool name="rect" label="Прямоугольник" /><Tool name="oval" label="Овал" />
              <Tool name="textbox" label="Надпись" /><Tool name="wordart" label="Объект WordArt" /><Tool name="clip" label="Картинка" />
            </Group>
            <Group $width={306} $last>
              <Tool name="fill" label="Цвет заливки" /><DropTool label="Цвета заливки" /><Tool name="pen" label="Цвет линий" /><DropTool label="Цвета линий" />
              <Tool name="colour" label="Цвет шрифта" /><DropTool label="Цвета шрифта" />
              <Tool name="weight" label="Тип линии" /><Tool name="dash" label="Тип штриха" /><Tool name="arrows" label="Вид стрелки" />
              <Tool name="shadow" label="Тень" /><Tool name="cube" label="Объем" /><MoreTools label="Другие кнопки рисования" />
            </Group>
          </ToolBar>

          <StatusBar>
            <StatusPane $width={322}>Слайд 14 из 38</StatusPane>
            <StatusPane $width={322}>1_Apex</StatusPane>
            <StatusPane $width={40} />
          </StatusBar>

          <TaskBar>
            <StartButton aria-label="Пуск">
              <svg width="56" height="40" viewBox="0 0 56 40" aria-hidden="true">
                <defs>
                  <radialGradient id="orb" cx=".5" cy=".75" r=".7">
                    <stop offset="0" stopColor="#7fd8f5" /><stop offset=".5" stopColor="#1f6f9c" /><stop offset="1" stopColor="#123c58" />
                  </radialGradient>
                </defs>
                <circle cx="28" cy="25" r="25" fill="url(#orb)" stroke="#8fa9b5" strokeWidth="2" />
                <path d="M7 17C14 -2 42 -2 49 17 36 22 20 22 7 17z" fill="#fff" opacity=".35" />
                <path d="M17 11c4-3 8-2 11 0l-3 11c-4-2-7-2-11 0z" fill="#e8562a" />
                <path d="M30 12c4 2 8 2 12-1l-3 11c-4 2-8 2-12 1z" fill="#8cc63e" />
                <path d="M13 25c4-2 8-2 11 0l-3 10c-4-2-7-2-11 0z" fill="#4aa3e8" />
                <path d="M26 26c4 2 8 2 12-1l-3 10c-4 3-8 2-12 1z" fill="#fbc62c" />
              </svg>
            </StartButton>
            <QuickLaunch>
              <BareButton aria-label="Переключение окон"><Ico w={22} h={18}><rect x="1" y="1" width="20" height="16" fill="#1f4f9c" stroke="#9ab7dc" /><path d="M4 4h7v5H4zM8 7h7v5H8zM12 10h6v4h-6z" fill="#dfeaf8" stroke="#1f4f9c" /></Ico></BareButton>
              <BareButton aria-label="Свернуть все окна"><Ico w={22} h={18}><rect x="1" y="1" width="20" height="15" fill="#3f78cc" stroke="#b4cbe6" /><path d="M2 2h18v6L2 12z" fill="#6f9fe0" /><path d="M2 15h8" stroke="#fff" strokeWidth="2" /></Ico></BareButton>
              <BareButton aria-label="Internet Explorer"><Ico w={22} h={20}><path d="M17 13a6.500 6.500 0 1 1 0-5H7" stroke="#3aa6ee" strokeWidth="3.500" transform="translate(0 1)" /><path d="M2 18C-1 11 12-1 20 2c2 2 0 4-1 5" stroke="#f4c443" strokeWidth="2" /></Ico></BareButton>
              <More aria-label="Еще"><Ico w={12} h={8}><path d="M1 1l3 3-3 3M6 1l3 3-3 3" stroke="#fff" strokeWidth="1.600" /></Ico></More>
            </QuickLaunch>
            <Tasks>
              <Task><Ico w={20} h={20}><path d="M2 3h8v15H2z" fill="#e9d77a" stroke="#a89030" /><path d="M8 5l9-2v14l-9 2z" fill="#f6eaa0" stroke="#b09a3a" /><path d="M11 12c0-3 1-5 4-6V3l4 5-4 4V9" fill="#3eaa3c" /></Ico>eIFL</Task>
              <Task><PptDoc word />Программа научн...</Task>
              <Task><PptDoc />OA citation_evaluati...</Task>
              <Task $active><PptDoc />Swan_sklad.ppt</Task>
            </Tasks>
            <Tray>
              <Language>RU</Language>
              <BareButton aria-label="Скрытые значки"><Ico w={10} h={12}><path d="M8 1L3 6l5 5" stroke="#fff" strokeWidth="2.500" /></Ico></BareButton>
              <Ico w={44} h={22}><rect x="9" y="2" width="15" height="15" rx="7" fill="#c8cbcd" /><rect x="14" y="6" width="14" height="14" rx="7" fill="#c8cbcd" /><path d="M22 8c-3-2-7-1-6 2 1 2 6 1 6 4s-5 3-7 1" stroke="#fff" strokeWidth="2" /></Ico>
              <Ico w={60} h={22}>
                <path d="M4 2v4M8 2v4" stroke="#e0b050" strokeWidth="2" /><path d="M2 6h8v5l-2 2v6H5v-6l-3-2z" fill="#eee" />
                <path d="M12 3h7v17h-7z" fill="#5ccb74" stroke="#eee" strokeWidth="1.500" />
                <path d="M32 2h10v9H32zM26 8h9v8h-9z" fill="#333" stroke="#ddd" strokeWidth="1.500" /><path d="M35 11l8 9M43 11l-8 9" stroke="#e81818" strokeWidth="3" />
                <path d="M49 8h3l5-6v18l-5-6h-3z" fill="#eee" />
              </Ico>
              <Clock>13:20</Clock>
            </Tray>
          </TaskBar>
        </AppWindow>
      </Page>
    </>
  );
}
